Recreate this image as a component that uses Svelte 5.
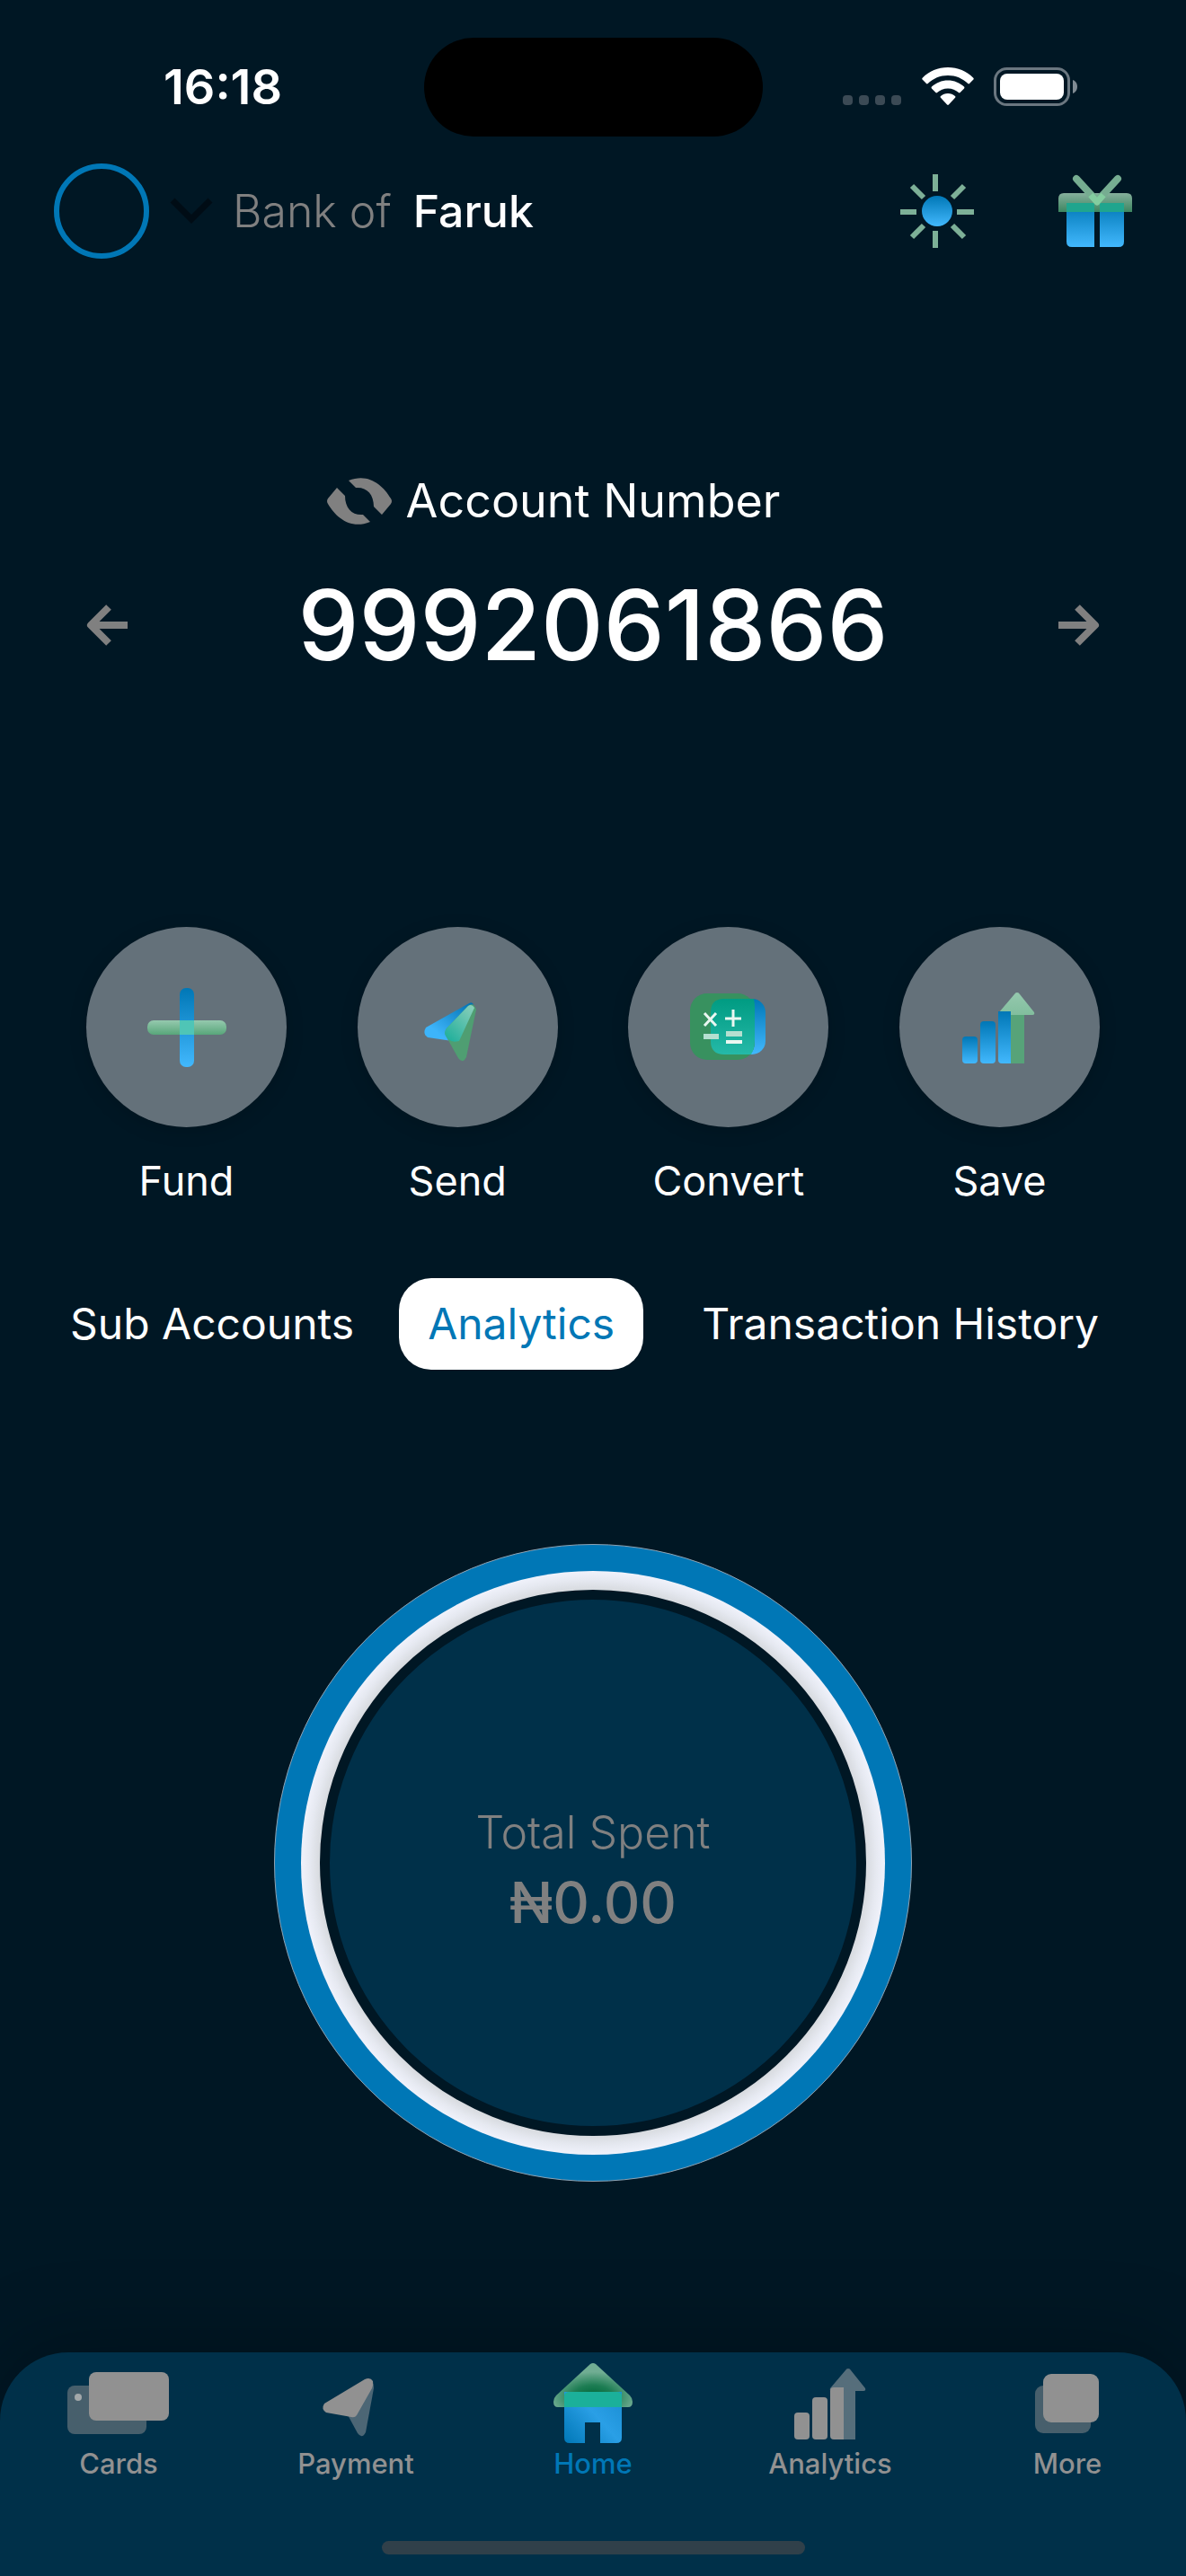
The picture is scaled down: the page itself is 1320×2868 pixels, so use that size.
<script>
  let activeTab = 'analytics';
  let activePage = 'home';

  const account = { owner: 'Faruk', number: '9992061866', spent: '₦0.00' };

  const actions = [
    { id: 'fund', label: 'Fund' },
    { id: 'send', label: 'Send' },
    { id: 'convert', label: 'Convert' },
    { id: 'save', label: 'Save' }
  ];

  const tabs = [
    { id: 'sub', label: 'Sub Accounts' },
    { id: 'analytics', label: 'Analytics' },
    { id: 'history', label: 'Transaction History' }
  ];

  const pages = [
    { id: 'cards', label: 'Cards' },
    { id: 'payment', label: 'Payment' },
    { id: 'home', label: 'Home' },
    { id: 'analytics', label: 'Analytics' },
    { id: 'more', label: 'More' }
  ];
</script>

<!-- Shared gradients -->
<svg class="defs" width="0" height="0" aria-hidden="true">
  <defs>
    <linearGradient id="blue" x1="0" y1="0" x2="0" y2="1">
      <stop offset="0" stop-color="#0077b6" />
      <stop offset="1" stop-color="#42b8fd" />
    </linearGradient>
    <linearGradient id="blue-side" x1="1" y1="0" x2="0" y2="1">
      <stop offset="0" stop-color="#0070b0" />
      <stop offset="0.75" stop-color="#3db4fa" />
    </linearGradient>
    <linearGradient id="blue-house" x1="0" y1="1" x2="1" y2="0.2">
      <stop offset="0" stop-color="#0077b6" />
      <stop offset="0.6" stop-color="#2a9fe6" />
      <stop offset="1" stop-color="#1c90d6" />
    </linearGradient>
    <linearGradient id="mint" x1="0" y1="0" x2="0" y2="1">
      <stop offset="0" stop-color="#95c9ae" />
      <stop offset="1" stop-color="#58a67a" />
    </linearGradient>
    <linearGradient id="teal" x1="0" y1="0" x2="0" y2="1">
      <stop offset="0" stop-color="#009b82" />
      <stop offset="1" stop-color="#25b9a8" />
    </linearGradient>
    <linearGradient id="lid" x1="0" y1="0" x2="0" y2="1">
      <stop offset="0" stop-color="#86b09c" />
      <stop offset="1" stop-color="#3c8560" />
    </linearGradient>
    <linearGradient id="teal-side" x1="1" y1="0" x2="0.2" y2="1">
      <stop offset="0" stop-color="#8fd0bb" />
      <stop offset="1" stop-color="#22b09c" />
    </linearGradient>
    <radialGradient id="roof" cx="0.5" cy="0.75" r="0.55">
      <stop offset="0" stop-color="#00683a" />
      <stop offset="0.45" stop-color="#1d7d53" />
      <stop offset="1" stop-color="#71ad93" />
    </radialGradient>
  </defs>
</svg>

<div class="screen">
  <div class="status">
    <time class="clock">16:18</time>
    <div class="island"></div>
    <div class="signals">
      <svg width="66" height="42" viewBox="0 0 66 42" fill="#3b4a55" aria-hidden="true">
        <rect x="0" y="31" width="11" height="11" rx="4" />
        <rect x="18" y="31" width="11" height="11" rx="4" />
        <rect x="36" y="31" width="11" height="11" rx="4" />
        <rect x="54" y="31" width="11" height="11" rx="4" />
      </svg>
      <svg width="58" height="42" viewBox="0 0 58 42" fill="#fff" aria-hidden="true">
        <path d="M29 0c11 0 21 4.400 28.300 11.700.6.600.6 1.300.1 1.900l-4.400 4.500c-.5.500-1.200.5-1.700 0C45.400 12.300 37.600 9 29 9S12.600 12.300 6.700 18.100c-.5.500-1.200.5-1.700 0L.6 13.600c-.5-.6-.5-1.300.1-1.900C8 4.400 18 0 29 0Z" />
        <path d="M29 14.500c7 0 13.300 2.700 18 7.100.6.600.6 1.200.1 1.800l-4.500 4.600c-.5.500-1.100.5-1.700 0-3.100-2.900-7.300-4.600-11.900-4.600s-8.800 1.700-11.900 4.600c-.6.500-1.200.5-1.700 0l-4.500-4.600c-.5-.6-.5-1.200.1-1.800 4.700-4.400 11-7.100 18-7.100Z" />
        <path d="M29 29c3 0 5.800 1.100 8 2.900.6.500.6 1.200.1 1.800l-7.200 7.800c-.5.500-1.300.5-1.800 0l-7.200-7.800c-.5-.6-.5-1.300.1-1.800 2.200-1.800 5-2.900 8-2.900Z" />
      </svg>
      <svg width="94" height="44" viewBox="0 0 94 44" aria-hidden="true">
        <rect x="1.500" y="1.500" width="82" height="40" rx="13" fill="none" stroke="#6b7780" stroke-width="3" />
        <rect x="7" y="7" width="71" height="29" rx="8" fill="#fff" />
        <path d="M88 14c3 1 5 4 5 7.500S91 28 88 29Z" fill="#808b93" />
      </svg>
    </div>
  </div>

  <header class="header">
    <button class="profile" type="button" aria-label="Switch account">
      <span class="avatar"></span>
      <svg width="48" height="30" viewBox="0 0 48 30" fill="none" stroke="#000c15" stroke-width="7" aria-hidden="true">
        <path d="M3 3l21 21L45 3" />
      </svg>
    </button>
    <h1 class="bank"><span>Bank of</span> <b>{account.owner}</b></h1>
    <div class="tools">
      <button class="plain" type="button" aria-label="Light mode">
        <svg width="82" height="82" viewBox="0 0 82 82" aria-hidden="true">
          <circle cx="41" cy="41" r="17" fill="url(#blue)" />
          <path d="M39 0v19M39 63v19M0 42h18M63 42h19M13 13l13 13M71 13L58 26M13 70l13-13M71 70L58 57" stroke="#7db097" stroke-width="6" />
        </svg>
      </button>
      <button class="plain" type="button" aria-label="Rewards">
        <svg width="82" height="82" viewBox="0 0 82 82" aria-hidden="true">
          <path d="M0 42V27q0-6 6-6h70q6 0 6 6v15Z" fill="url(#lid)" />
          <path d="M9 32h31v49H15q-6 0-6-6ZM46 32h27v43q0 6-6 6H46Z" fill="url(#blue)" />
          <path d="M9 32h31v10H9ZM46 32h27v10H46Z" fill="#20a58e" />
          <path d="M20 5l23 25L66 5" fill="none" stroke="#76ad91" stroke-width="8" stroke-linecap="round" stroke-linejoin="round" />
          <path d="M36 23l7 8 7-8" fill="none" stroke="#83cd9f" stroke-width="7" stroke-linejoin="round" />
        </svg>
      </button>
    </div>
  </header>

  <main>
    <section class="account">
      <div class="account-label">
        <svg width="72" height="52" viewBox="0 0 72 52" fill="#808080" aria-hidden="true">
          <path d="M24 3C46-6 62 8 71 23q2 3 0 6L61 41l-9-9c0-14-8-22-20-21Z" />
          <path d="M48 49C26 58 10 44 1 29q-2-3 0-6L11 11l9 9c0 14 8 22 20 21Z" />
        </svg>
        <h2>Account Number</h2>
      </div>
      <div class="account-row">
        <button class="plain" type="button" aria-label="Previous account">
          <svg width="46" height="48" viewBox="0 0 46 48" fill="none" stroke="#808080" stroke-width="8" stroke-linejoin="round" aria-hidden="true">
            <path d="M46 24H6M25 4L5 24l20 20" />
          </svg>
        </button>
        <output class="number">{account.number}</output>
        <button class="plain" type="button" aria-label="Next account">
          <svg width="46" height="48" viewBox="0 0 46 48" fill="none" stroke="#808080" stroke-width="8" stroke-linejoin="round" aria-hidden="true">
            <path d="M0 24h40M21 4l20 20-20 20" />
          </svg>
        </button>
      </div>
    </section>

    <section class="actions">
      {#each actions as action (action.id)}
        <button class="action" type="button">
          <span class="disc">
            <svg width="88" height="88" viewBox="0 0 88 88" aria-hidden="true">
              {#if action.id === 'fund'}
                <rect x="36" y="0" width="16" height="88" rx="7" fill="url(#blue)" />
                <rect x="0" y="36" width="88" height="16" rx="7" fill="url(#mint)" />
                <rect x="36" y="36" width="16" height="16" fill="#4fc5b6" />
              {:else if action.id === 'send'}
                <path d="M57 17q4-2 5 2L45 60 11 55q-6-4-2-11Z" fill="url(#blue-side)" />
                <path d="M56 20q6-5 9 4L54 77q-4 8-9 1L31 53q-2-4 1-8Z" fill="#4f9e72" />
                <path d="M56 20q4-3 7 2L46 59q-8 2-12-2l-3-4q-2-4 1-8Z" fill="url(#teal-side)" />
              {:else if action.id === 'convert'}
                <rect x="24" y="12" width="61" height="62" rx="15" fill="url(#blue)" />
                <rect x="1" y="6" width="72" height="74" rx="19" fill="#38915f" />
                <path d="M39 12h33q1 5 1 10v36q0 9-4 16H39q-15 0-15-15V27q0-15 15-15Z" fill="url(#teal)" />
                <path d="M17 28l13 14M30 28L17 42M40 34h18M49 24v19" stroke="#eaf7f1" stroke-width="3" />
                <path d="M16 54h17M41 51h18" stroke="#b5dfd0" stroke-width="6" />
                <path d="M41 60h18" stroke="#eaf7f1" stroke-width="4" />
              {:else}
                <path d="M64 5q2 0 3 2l16 20q1 3-2 3h-9v54H56V30H46q-3 0-2-3L61 7q1-2 3-2Z" fill="url(#mint)" />
                <path d="M57 30h15v54H57Z" fill="#57a379" />
                <rect x="3" y="54" width="17" height="30" rx="4" fill="url(#blue)" />
                <rect x="23" y="37" width="17" height="47" rx="4" fill="url(#blue)" />
                <path d="M43 26h14v58H47q-4 0-4-4Z" fill="url(#blue)" />
              {/if}
            </svg>
          </span>
          {action.label}
        </button>
      {/each}
    </section>

    <div class="tabs" role="tablist">
      {#each tabs as tab (tab.id)}
        <button
          class="tab"
          class:active={activeTab === tab.id}
          role="tab"
          type="button"
          aria-selected={activeTab === tab.id}
          on:click={() => (activeTab = tab.id)}
        >{tab.label}</button>
      {/each}
    </div>

    <section class="ring">
      <div class="ring-track">
        <div class="ring-body">
          <p class="spent-label">Total Spent</p>
          <p class="spent">{account.spent}</p>
        </div>
      </div>
    </section>
  </main>

  <nav class="nav">
    <div class="nav-items">
      {#each pages as page (page.id)}
        <a
          class="nav-item"
          class:current={activePage === page.id}
          href={`#${page.id}`}
          on:click={() => (activePage = page.id)}
        >
          <span class="nav-icon">
            {#if page.id === 'cards'}
              <svg width="114" height="70" viewBox="0 0 114 70" aria-hidden="true">
                <rect x="0" y="15" width="88" height="54" rx="8" fill="#475f6c" />
                <circle cx="12" cy="28" r="4" fill="#a3a8aa" />
                <rect x="24" y="0" width="89" height="54" rx="8" fill="#919191" />
              </svg>
            {:else if page.id === 'payment'}
              <svg width="88" height="88" viewBox="0 0 88 88" aria-hidden="true">
                <path d="M58 22q6-4 6 5L55 76q-4 8-9 1L33 53Z" fill="#4c6675" />
                <path d="M54 17q6-3 9 2 1 4-1 8L45 57q-2 3-6 2l-28-5q-6-4-2-10Z" fill="#919191" />
              </svg>
            {:else if page.id === 'home'}
              <svg width="88" height="90" viewBox="0 0 88 90" aria-hidden="true">
                <path d="M41 1q3-2 6 0l38 35q3 3 3 7 0 6-5 6H5q-5 0-5-6 0-4 3-7Z" fill="url(#roof)" />
                <path d="M12 32h64v51q0 6-6 6H52V66H35v23H18q-6 0-6-6Z" fill="url(#blue-house)" />
                <path d="M12 49V37q0-5 6-5h52q6 0 6 5v12Z" fill="#1bb09a" />
              </svg>
            {:else if page.id === 'analytics'}
              <svg width="88" height="88" viewBox="0 0 88 88" aria-hidden="true">
                <path d="M64 5q2 0 3 2l16 20q1 3-2 3h-9v54H56V30H46q-3 0-2-3L61 7q1-2 3-2Z" fill="#566e7b" />
                <rect x="4" y="54" width="17" height="30" rx="4" fill="#919191" />
                <rect x="24" y="37" width="17" height="47" rx="4" fill="#919191" />
                <path d="M44 30q0-4 4-4h11v58H48q-4 0-4-4Z" fill="#919191" />
              </svg>
            {:else}
              <svg width="72" height="66" viewBox="0 0 72 66" aria-hidden="true">
                <rect x="0" y="13" width="62" height="53" rx="9" fill="#475f6c" />
                <rect x="9" y="0" width="62" height="54" rx="9" fill="#919191" />
              </svg>
            {/if}
          </span>
          {page.label}
        </a>
      {/each}
    </div>
    <div class="home-bar"></div>
  </nav>
</div>

<style>
  :global(body) {
    margin: 0;
    background: #001724;
  }

  .defs { position: absolute; }

  .screen {
    display: flex;
    flex-direction: column;
    min-height: 100vh;
    background: #001724;
    color: #fff;
    font-family: Inter, 'Noto Sans', sans-serif;
  }

  svg { display: block; }

  h1, h2, p { margin: 0; }

  button {
    padding: 0;
    border: 0;
    background: transparent;
    color: inherit;
    font-family: inherit;
    cursor: pointer;
  }

  /* Status bar */
  .status {
    display: grid;
    grid-template-columns: 1fr 377px 1fr;
    align-items: center;
    padding-top: 42px;
  }
  .clock {
    padding-left: 182px;
    font-size: 54px;
    line-height: 60px;
    font-weight: 600;
  }
  .island {
    height: 110px;
    border-radius: 55px;
    background: #000;
  }
  .signals {
    display: flex;
    justify-content: flex-end;
    gap: 22px;
    padding-right: 120px;
  }

  /* Header */
  .header {
    display: flex;
    align-items: center;
    padding: 30px 60px 0;
  }
  .profile {
    display: flex;
    align-items: center;
    gap: 23px;
  }
  .avatar {
    box-sizing: border-box;
    width: 106px;
    height: 106px;
    border: 6px solid #0077b6;
    border-radius: 50%;
  }
  .bank {
    display: flex;
    gap: 24px;
    margin-left: 22px;
    font-size: 50px;
    line-height: 60px;
    font-weight: 300;
  }
  .bank span { color: #808080; }
  .bank b { font-weight: 500; }
  .tools {
    display: flex;
    gap: 94px;
    margin-left: auto;
  }

  /* Account */
  .account { padding: 240px 96px 0; }
  .account-label {
    display: flex;
    justify-content: center;
    align-items: center;
    gap: 16px;
    padding-right: 88px;
  }
  .account-label h2 {
    font-size: 52px;
    line-height: 60px;
    font-weight: 400;
  }
  .account-row {
    display: flex;
    justify-content: space-between;
    align-items: center;
    margin-top: 48px;
  }
  .number {
    font-size: 108px;
    line-height: 120px;
    font-weight: 500;
  }

  /* Quick actions */
  .actions {
    display: flex;
    justify-content: space-between;
    padding: 276px 96px 0;
  }
  .action {
    display: flex;
    flex-direction: column;
    align-items: center;
    gap: 32px;
    width: 223px;
    font-size: 45px;
    line-height: 56px;
  }
  .disc {
    display: grid;
    place-items: center;
    width: 223px;
    height: 223px;
    border-radius: 50%;
    background: #64717a;
    box-shadow: 0 4px 20px rgba(0, 0, 0, 0.15);
  }

  /* Tabs */
  .tabs {
    display: flex;
    gap: 18px;
    padding: 80px 65px 0 46px;
  }
  .tab {
    padding: 22px 32px;
    border-radius: 36px;
    font-size: 48px;
    line-height: 58px;
    white-space: nowrap;
  }
  .tab:last-child { margin-left: auto; }
  .tab.active {
    background: #fff;
    color: #0077b6;
  }

  /* Spending ring */
  .ring {
    box-sizing: border-box;
    width: 710px;
    margin: 194px auto 80px;
    padding: 29px;
    border: 1px solid #8fa3b3;
    border-radius: 50%;
    background: #0077b6;
  }
  .ring-track {
    padding: 21px;
    border-radius: 50%;
    background: radial-gradient(closest-side, #d5d8dc 93%, #e6e9f1 97%, #f0f2fb 100%);
  }
  .ring-body {
    box-sizing: border-box;
    display: flex;
    flex-direction: column;
    align-items: center;
    justify-content: center;
    gap: 8px;
    aspect-ratio: 1;
    padding-top: 20px;
    border: 11px solid #001724;
    border-radius: 50%;
    background: #003049;
    color: #808080;
  }
  .spent-label {
    font-size: 50px;
    line-height: 60px;
    font-weight: 300;
  }
  .spent {
    font-size: 63px;
    line-height: 80px;
    font-weight: 500;
  }

  /* Bottom navigation */
  .nav {
    margin-top: auto;
    padding: 12px 0 24px;
    border-radius: 76px 76px 0 0;
    background: #003049;
    box-shadow: 0 -10px 90px rgba(0, 0, 0, 0.25);
  }
  .nav-items {
    display: grid;
    grid-template-columns: repeat(5, 1fr);
  }
  .nav-item {
    display: flex;
    flex-direction: column;
    align-items: center;
    gap: 2px;
    color: #919191;
    font-size: 31px;
    line-height: 40px;
    font-weight: 500;
    text-decoration: none;
  }
  .nav-item.current { color: #0077b6; }
  .nav-icon {
    display: flex;
    align-items: center;
    height: 90px;
  }
  .home-bar {
    width: 471px;
    height: 15px;
    margin: 66px auto 0;
    border-radius: 8px;
    background: #30404a;
  }
</style>
